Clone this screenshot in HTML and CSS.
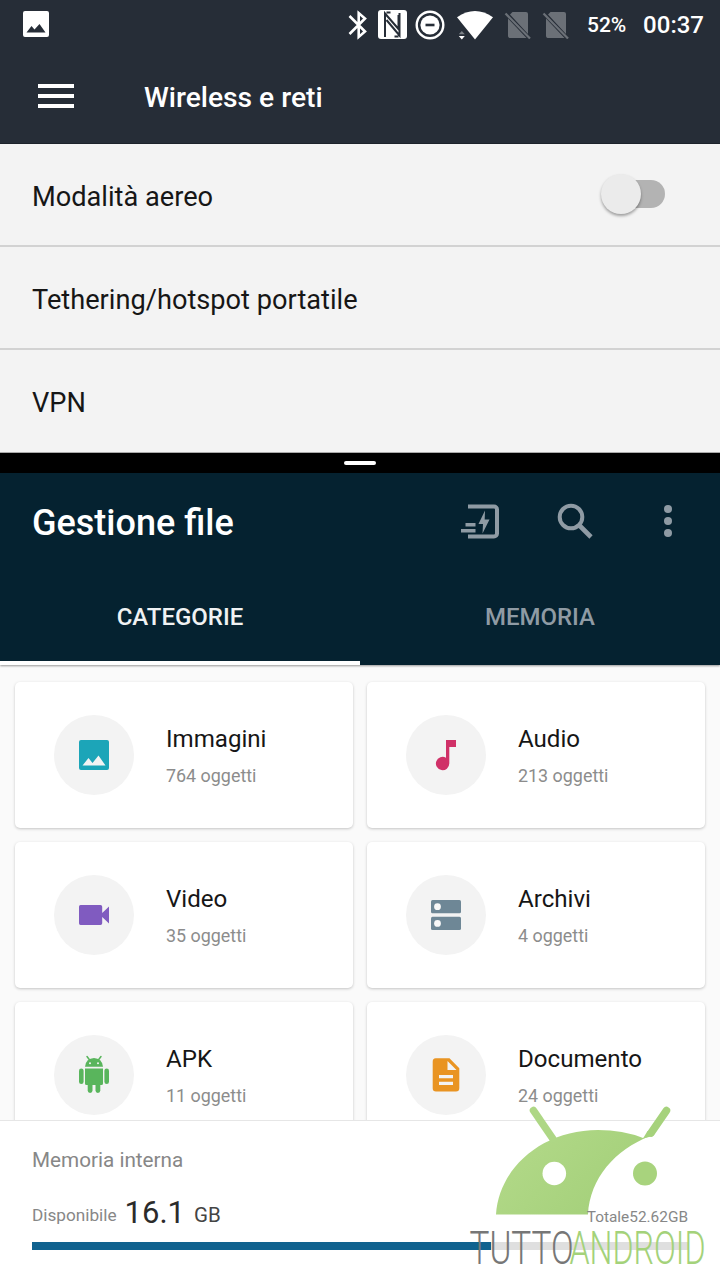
FILE: index.html
```html
<!DOCTYPE html>
<html lang="it">
<head>
    <meta charset="UTF-8">
    <meta name="viewport" content="width=device-width, initial-scale=1.0">
    <title>Gestione file</title>
    <link rel="stylesheet" href="styles.css">
</head>
<body>
    <div class="screen">
        <!-- impostazioni -->
        <div class="settings-head">
            <div class="status-bar">
                <svg class="st-image" viewBox="0 0 26 26"><path fill="#fff" fill-rule="evenodd" d="M2 0h22a2 2 0 0 1 2 2v22a2 2 0 0 1-2 2H2a2 2 0 0 1-2-2V2a2 2 0 0 1 2-2zM3.500 21.500h19L16.500 13l-5 5.500-3-3.500z"/></svg>
                <svg class="st-bt" viewBox="0 0 20 30"><path fill="none" stroke="#fff" stroke-width="2.600" d="M1.500 6L17 21.500 10.700 27V3L17 8.500 1.500 24"/></svg>
                <svg class="st-nfc" viewBox="0 0 29 29"><rect width="29" height="29" rx="3" fill="#fff"/><path fill="none" stroke="#262d37" stroke-width="2" d="M7 27V3.500L20.500 19V5M8.500 2.500h4M8.500 10L21.500 25.500V3M16.500 26.500h4"/></svg>
                <svg class="st-dnd" viewBox="0 0 30 30"><circle cx="15" cy="15" r="13.300" fill="none" stroke="#fff" stroke-width="2.400"/><circle cx="15" cy="15" r="9.600" fill="#fff"/><path stroke="#262d37" stroke-width="2.600" d="M10.500 15h9"/></svg>
                <svg class="st-wifi" viewBox="0 0 36 30"><path fill="#fff" d="M0 7.300Q18-5.500 36 7.300L18 29.500z"/><path fill="#7c8187" d="M1.800 24.300h6L4.800 21z"/><path fill="#fff" d="M1.800 26h6l-3 3.500z"/></svg>
                <svg class="st-sim" viewBox="0 0 28 28"><path fill="#6b7077" d="M8.500 1H22a2 2 0 0 1 2 2v20L6 3.500zM4 7.500L22.500 27H5.500A2 2 0 0 1 4 25z"/><path stroke="#6b7077" stroke-width="2.200" d="M1.500 2.500L26 27.500"/></svg>
                <svg class="st-sim" viewBox="0 0 28 28"><path fill="#6b7077" d="M8.500 1H22a2 2 0 0 1 2 2v20L6 3.500zM4 7.500L22.500 27H5.500A2 2 0 0 1 4 25z"/><path stroke="#6b7077" stroke-width="2.200" d="M1.500 2.500L26 27.500"/></svg>
                <span class="battery">52%</span>
                <span class="clock">00:37</span>
            </div>
            <div class="toolbar">
                <div class="menu"><i></i><i></i><i></i></div>
                <h1>Wireless e reti</h1>
            </div>
        </div>
        <div class="settings-list">
            <div class="row"><span>Modalità aereo</span><div class="switch"></div></div>
            <div class="row"><span>Tethering/hotspot portatile</span></div>
            <div class="row"><span>VPN</span></div>
        </div>

        <div class="divider"><i></i></div>

        <!-- gestione file -->
        <div class="files-head">
            <div class="files-bar">
                <h2>Gestione file</h2>
                <svg class="ic-transfer" viewBox="0 0 40 36"><path fill="none" stroke="#8f9ba4" stroke-width="4" d="M8 3.500h26a3 3 0 0 1 3 3v24a3 3 0 0 1-3 3H8"/><path fill="#8f9ba4" d="M25 7.500L18.500 21h4.500l-.500 9.500L29.500 16.500h-4.800zM5.500 20h10v3.500h-10zM1 26h14.500v3.500H1z"/></svg>
                <svg class="ic-search" viewBox="0 0 36 36"><circle cx="14" cy="14" r="11.300" fill="none" stroke="#8f9ba4" stroke-width="4"/><path stroke="#8f9ba4" stroke-width="4.600" d="M22 22L34 34"/></svg>
                <svg class="ic-more" viewBox="0 0 8 32"><g fill="#8f9ba4"><circle cx="4" cy="4" r="4"/><circle cx="4" cy="16" r="4"/><circle cx="4" cy="28" r="4"/></g></svg>
            </div>
            <div class="tabs">
                <div class="tab active">CATEGORIE</div>
                <div class="tab">MEMORIA</div>
            </div>
        </div>

        <div class="grid">
            <div class="card">
                <div class="circle"><svg viewBox="0 0 40 40"><path fill="#1ca5b8" fill-rule="evenodd" d="M7 5h26a2 2 0 0 1 2 2v26a2 2 0 0 1-2 2H7a2 2 0 0 1-2-2V7a2 2 0 0 1 2-2zM8.500 30.500h23L24.500 20.500l-6 7.500-4-5z"/></svg></div>
                <div class="card-text"><h3>Immagini</h3><p>764 oggetti</p></div>
            </div>
            <div class="card">
                <div class="circle"><svg viewBox="0 0 40 40"><path fill="#d03168" d="M20 5h10v7h-6.700v16.500a6.700 6.700 0 1 1-3.300-5.800z"/></svg></div>
                <div class="card-text"><h3>Audio</h3><p>213 oggetti</p></div>
            </div>
            <div class="card">
                <div class="circle"><svg viewBox="0 0 40 40"><path fill="#805bc0" d="M6.500 10h20a1.700 1.700 0 0 1 1.700 1.700V18L35 11.500v17L28.200 22v6.300a1.700 1.700 0 0 1-1.700 1.700h-20A1.700 1.700 0 0 1 5 28.300V11.700A1.700 1.700 0 0 1 6.500 10z"/></svg></div>
                <div class="card-text"><h3>Video</h3><p>35 oggetti</p></div>
            </div>
            <div class="card">
                <div class="circle"><svg viewBox="0 0 40 40"><g fill="#6e8796"><rect x="5" y="5" width="30" height="13.300" rx="1.500"/><rect x="5" y="21.700" width="30" height="13.300" rx="1.500"/></g><g fill="#f8f8f8"><circle cx="11.500" cy="11.700" r="3.400"/><circle cx="11.500" cy="28.400" r="3.400"/></g></svg></div>
                <div class="card-text"><h3>Archivi</h3><p>4 oggetti</p></div>
            </div>
            <div class="card">
                <div class="circle"><svg viewBox="0 0 40 40"><g fill="#59b55c"><path d="M11 11.800a9 8.800 0 0 1 18 0z"/><path d="M11 13.400h18v15a1.500 1.500 0 0 1-1.500 1.500h-15a1.500 1.500 0 0 1-1.500-1.500z"/><rect x="5" y="13.500" width="4.600" height="15.500" rx="2.300"/><rect x="30.400" y="13.500" width="4.600" height="15.500" rx="2.300"/><rect x="13.700" y="25" width="4.800" height="13" rx="2.400"/><rect x="21.500" y="25" width="4.800" height="13" rx="2.400"/></g><path stroke="#59b55c" stroke-width="1.500" stroke-linecap="round" d="M13 1.500l3 4M27 1.500l-3 4"/><circle cx="16" cy="8.200" r="1" fill="#f3f3f3"/><circle cx="24" cy="8.200" r="1" fill="#f3f3f3"/></svg></div>
                <div class="card-text"><h3>APK</h3><p>11 oggetti</p></div>
            </div>
            <div class="card">
                <div class="circle"><svg viewBox="0 0 40 40"><path fill="#e99422" fill-rule="evenodd" d="M9.700 3.300H23.500L33.300 13.300v20a3.300 3.300 0 0 1-3.300 3.300H10a3.300 3.300 0 0 1-3.300-3.300V6.700a3.300 3.300 0 0 1 3-3.400zM21.500 6v9h9zM13 20v3.300h14V20zM13 26.700V30h14v-3.300z"/></svg></div>
                <div class="card-text"><h3>Documento</h3><p>24 oggetti</p></div>
            </div>
        </div>

        <div class="storage">
            <p class="storage-title">Memoria interna</p>
            <div class="storage-info">
                <span class="small">Disponibile</span>
                <b>16.1</b>
                <span class="unit">GB</span>
                <span class="total">Totale52.62GB</span>
            </div>
            <div class="bar"><div class="bar-fill" style="width: 70%"></div></div>
        </div>

        <svg class="watermark" viewBox="0 0 260 180">
            <defs>
                <linearGradient id="green" x1="0" y1="0" x2="1" y2="0.500">
                    <stop offset="0" stop-color="#b4da8a"/>
                    <stop offset="1" stop-color="#a4d07a"/>
                </linearGradient>
            </defs>
            <path fill="url(#green)" d="M36 114.500C39 68 82 30 138 30Q163 30 183 38L190 36C155 50 130 78 128 114.500z"/>
            <path stroke="#aed785" stroke-width="7.500" stroke-linecap="round" d="M73.500 10.500L93 39"/>
            <path stroke="#a6d27c" stroke-width="7.500" stroke-linecap="round" d="M206.500 10.500L191 33"/>
            <path fill="#a6d27c" d="M187.500 31L183 38.500 193 36 194.500 34z"/>
            <circle cx="94.300" cy="73.500" r="11.800" fill="#fff"/>
            <circle cx="185" cy="73.500" r="12" fill="#a8d37d"/>
            <text class="wm-gray" x="9.500" y="163.500" textLength="104" lengthAdjust="spacingAndGlyphs">TUTTO</text>
            <text class="wm-green" x="109.500" y="163.500" textLength="136" lengthAdjust="spacingAndGlyphs">ANDROID</text>
        </svg>
    </div>
</body>
</html>
```

FILE: styles.css
```css
* {
    box-sizing: border-box;
}
body {
    margin: 0;
    font-family: Roboto, sans-serif;
    color: #161616;
}
h1, h2, h3, p {
    margin: 0;
}
svg {
    display: block;
    flex: none;
}
.screen {
    position: relative;
    width: 720px;
    height: 1280px;
    overflow: hidden;
    display: flex;
    flex-direction: column;
    background-color: #fafafa;
}

/* barra di stato */
.settings-head {
    height: 144px;
    flex: none;
    background-color: #262d37;
    color: #fff;
    border-bottom: 1px solid #1c222a;
}
.status-bar {
    height: 49px;
    padding-left: 23px;
    padding-right: 16px;
    display: flex;
    align-items: center;
}
.st-image {
    width: 26px;
    height: 26px;
    margin-right: 299px;
    margin-bottom: 1px;
}
.st-bt {
    width: 20px;
    height: 30px;
    margin-right: 10px;
}
.st-nfc {
    width: 29px;
    height: 29px;
    margin-right: 8px;
}
.st-dnd {
    width: 30px;
    height: 30px;
    margin-right: 12px;
}
.st-wifi {
    width: 36px;
    height: 30px;
    margin-right: 11px;
}
.st-sim {
    width: 28px;
    height: 28px;
    margin-right: 10px;
}
.battery {
    margin-left: 7px;
    font-size: 21px;
    font-weight: 500;
}
.clock {
    margin-left: auto;
    font-size: 24px;
    font-weight: 500;
}
.toolbar {
    height: 94px;
    padding-left: 38px;
    display: flex;
    align-items: center;
}
.menu {
    width: 36px;
    display: flex;
    flex-direction: column;
    gap: 6px;
    margin-right: 70px;
}
.menu i {
    height: 4px;
    background-color: #fff;
}
.toolbar h1 {
    padding-top: 2px;
    font-size: 28.2px;
    font-weight: 500;
}

/* elenco */
.settings-list {
    flex: none;
    height: 309px;
    background-color: #f3f3f3;
}
.row {
    height: 103px;
    padding: 0 55px 0 32px;
    display: flex;
    align-items: center;
    justify-content: space-between;
    border-bottom: 2px solid #d2d2d2;
    font-size: 27.2px;
}
.row span {
    padding-top: 4px;
}
.row:last-child {
    border-bottom: 1px solid #aaa;
}
.switch {
    width: 56px;
    height: 28px;
    margin-bottom: 1px;
    border-radius: 14px;
    background-color: #b3b3b3;
    display: flex;
    align-items: center;
}
.switch::before {
    content: "";
    width: 40px;
    height: 40px;
    margin-left: -8px;
    border-radius: 50%;
    background-color: #ebebeb;
    box-shadow: 0 2px 3px rgba(0, 0, 0, 0.35);
}
.divider {
    flex: none;
    height: 20px;
    background-color: #000;
    display: flex;
    align-items: center;
    justify-content: center;
}
.divider i {
    width: 32px;
    height: 4px;
    border-radius: 2px;
    background-color: #fff;
}

/* app file */
.files-head {
    flex: none;
    height: 192px;
    background-color: #052230;
    box-shadow: 0 1px 2px rgba(0, 0, 0, 0.4);
}
.files-bar {
    height: 95px;
    padding-left: 32px;
    padding-right: 48px;
    display: flex;
    align-items: center;
}
.files-bar h2 {
    margin-right: auto;
    padding-top: 4px;
    font-size: 36px;
    font-weight: 500;
    color: #fff;
}
.ic-transfer {
    width: 40px;
    height: 36px;
    margin-right: 57px;
}
.ic-search {
    width: 36px;
    height: 36px;
    margin-right: 71px;
}
.ic-more {
    width: 8px;
    height: 32px;
}
.tabs {
    height: 97px;
    display: flex;
}
.tab {
    flex: 1;
    display: flex;
    align-items: center;
    justify-content: center;
    padding-top: 5px;
    border-bottom: 4px solid transparent;
    font-size: 24px;
    font-weight: 500;
    color: #8f9ba4;
}
.tab.active {
    color: #f0f2f3;
    border-bottom-color: #fff;
}
.grid {
    flex: none;
    height: 455px;
    padding: 17px 15px 0;
    overflow: hidden;
    display: grid;
    grid-template-columns: 338px 338px;
    grid-auto-rows: 146px;
    gap: 14px;
}
.card {
    display: flex;
    align-items: center;
    padding-left: 39px;
    border-radius: 5px;
    background-color: #fff;
    box-shadow: 0 1px 3px rgba(0, 0, 0, 0.22);
}
.circle {
    width: 80px;
    height: 80px;
    margin-right: 32px;
    border-radius: 50%;
    background-color: #f3f3f3;
    display: flex;
    align-items: center;
    justify-content: center;
}
.circle svg {
    width: 40px;
    height: 40px;
}
.card-text {
    padding-top: 4px;
}
.card h3 {
    font-size: 24.1px;
    font-weight: 400;
    line-height: 30px;
}
.card p {
    margin-top: 8px;
    font-size: 17.9px;
    line-height: 28px;
    color: #8c8c8c;
}

/* memoria */
.storage {
    flex: 1;
    padding: 24px 32px 0;
    border-top: 1px solid #e6e6e6;
    background-color: #fff;
    color: #878787;
}
.storage-title {
    font-size: 20.7px;
    line-height: 30px;
}
.storage-info {
    margin-top: 18px;
    height: 39px;
    display: flex;
    align-items: baseline;
}
.storage-info b {
    margin: 0 9px 0 8px;
    font-size: 31px;
    font-weight: 400;
    line-height: 40px;
    color: #2b2b2b;
}
.small {
    font-size: 17.2px;
    position: relative;
    top: -2px;
}
.unit {
    font-size: 20.5px;
    color: #444;
    position: relative;
    top: -1px;
}
.total {
    margin-left: auto;
    font-size: 15.4px;
    position: relative;
    top: -1px;
    z-index: 2;
}
.bar {
    margin-top: 10px;
    height: 8px;
    background-color: #dfdfdf;
}
.bar-fill {
    height: 8px;
    background-color: #10628f;
}
.watermark {
    position: absolute;
    right: 0;
    bottom: 0;
    width: 260px;
    height: 180px;
}
.watermark text {
    font-size: 46px;
    font-weight: 300;
}
.wm-gray {
    fill: #777;
}
.wm-green {
    fill: #a4d27a;
}
```
